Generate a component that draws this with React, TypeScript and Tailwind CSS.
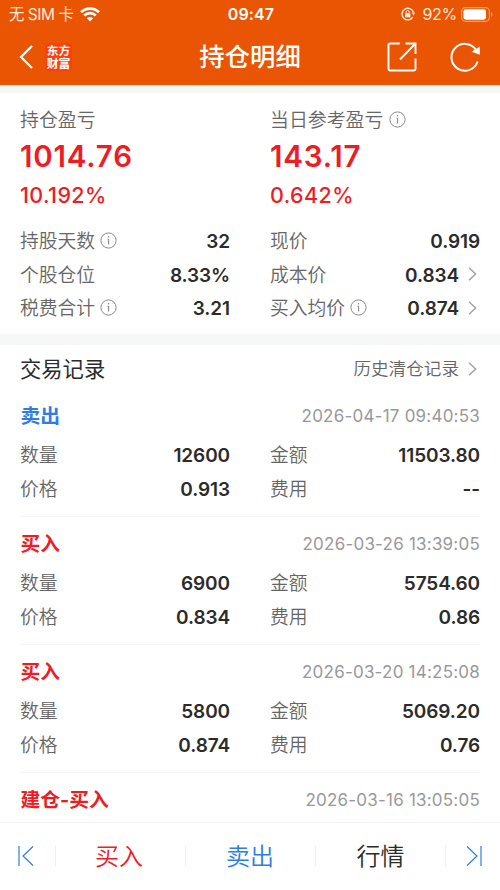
import type { ReactNode } from "react";

const summary = [
  { title: "持仓盈亏", value: "1014.76", percent: "10.192%", info: false },
  { title: "当日参考盈亏", value: "143.17", percent: "0.642%", info: true },
];

const details = [
  { label: "持股天数", value: "32", info: true, arrow: false },
  { label: "现价", value: "0.919", info: false, arrow: false },
  { label: "个股仓位", value: "8.33%", info: false, arrow: false },
  { label: "成本价", value: "0.834", info: false, arrow: true },
  { label: "税费合计", value: "3.21", info: true, arrow: false },
  { label: "买入均价", value: "0.874", info: true, arrow: true },
];

const records = [
  { id: 1, type: "卖出", sell: true, time: "2026-04-17 09:40:53", count: "12600", amount: "11503.80", price: "0.913", fee: "--" },
  { id: 2, type: "买入", sell: false, time: "2026-03-26 13:39:05", count: "6900", amount: "5754.60", price: "0.834", fee: "0.86" },
  { id: 3, type: "买入", sell: false, time: "2026-03-20 14:25:08", count: "5800", amount: "5069.20", price: "0.874", fee: "0.76" },
];

function InfoIcon() {
  return (
    <svg className="ml-[5px] h-[17px] w-[17px] shrink-0" viewBox="0 0 17 17" fill="none" stroke="#8a8a8a">
      <circle cx="8.5" cy="8.5" r="7.6" strokeWidth="1" />
      <path d="M7.6 7.2h1v5.4" strokeWidth="1.1" />
      <circle cx="8.5" cy="4.8" r="0.8" fill="#8a8a8a" stroke="none" />
    </svg>
  );
}

function ArrowIcon() {
  return (
    <svg className="ml-[9px] mr-[3px] h-[14px] w-[9px] shrink-0" viewBox="0 0 9 14" fill="none" stroke="#a3a3a3" strokeWidth="1.5">
      <path d="M1 0.8L7.6 7L1 13.2" />
    </svg>
  );
}

function Field({ label, value, info, arrow }: { label: string; value: string; info?: boolean; arrow?: boolean }) {
  return (
    <div className="flex h-[33.5px] items-center">
      <span className="pt-[4px] text-[18.8px] font-[350] text-[#666]">{label}</span>
      {info && <InfoIcon />}
      <span className="ml-auto pt-[2px] text-[19px] font-semibold tracking-[-0.1px] text-[#2b2b2b]">{value}</span>
      {arrow && <ArrowIcon />}
    </div>
  );
}

function RecordHead({ type, sell, time }: { type: string; sell?: boolean; time: string }) {
  return (
    <div className="flex h-[46px] items-center justify-between">
      <span className={sell ? "pl-[0.5px] pt-[3px] text-[19.8px] font-bold text-[#2f7de1]" : "pl-[0.5px] pt-[3px] text-[19.8px] font-bold text-[#ee1c25]"}>{type}</span>
      <span className="pt-[2px] text-[17px] tracking-[0.22px] text-[#999]">{time}</span>
    </div>
  );
}

function Tab({ children, color }: { children: ReactNode; color: string }) {
  return (
    <div className="flex flex-1 items-center justify-center border-r border-[#f1f1f1]">
      <span className={color}>{children}</span>
    </div>
  );
}

export default function App() {
  return (
    <div className="flex h-[890px] w-[500px] flex-col overflow-hidden bg-white font-['Inter','Noto_Sans_CJK_SC',sans-serif] leading-none">
      <header className="h-[85px] shrink-0 bg-[#ea5504] text-white">
        <div className="grid h-[28px] grid-cols-3 items-center pl-[9px] pr-[7px]">
          <div className="flex items-center text-[15.5px] text-[#ffe9d9]">
            <span className="whitespace-nowrap pt-[1px] tracking-[-0.5px]">无 SIM 卡</span>
            <svg className="ml-[7px] h-[15px] w-[20px]" viewBox="0 0 20 15" fill="none" stroke="#fff" strokeWidth="2.7">
              <path d="M1 5.2C6 0.3 14 0.3 19 5.2M4.2 8.6C7.6 5.4 12.4 5.4 15.8 8.6" />
              <path d="M10 14.4L6.8 11.2C8.6 9.6 11.4 9.6 13.2 11.2Z" fill="#fff" stroke="none" />
            </svg>
          </div>
          <div className="text-center text-[16px] font-semibold tracking-[0.1px]">09:47</div>
          <div className="flex items-center justify-end text-[16px] text-[#ffe9d9]">
            <svg className="mr-[7px] h-[14px] w-[14px]" viewBox="0 0 14 14" fill="none" stroke="#ffe9d9" strokeWidth="1.4">
              <path d="M11.8 10.2A5.8 5.8 0 1 1 12.4 5.2" />
              <path d="M10.6 5.4h3.4l-1.4 3z" fill="#ffe9d9" stroke="none" />
              <rect x="4" y="6.2" width="5.4" height="4" rx="0.5" fill="#ffe9d9" stroke="none" />
              <path d="M5.2 6.3V5a1.5 1.5 0 0 1 3 0v1.3" strokeWidth="1" />
            </svg>
            <span className="tracking-[-0.3px]">92%</span>
            <svg className="ml-[4px] h-[15px] w-[32px]" viewBox="0 0 32 15" fill="none">
              <rect x="0.6" y="0.6" width="27.8" height="13.8" rx="4" stroke="#f7a878" strokeWidth="1.1" />
              <rect x="2.4" y="2.3" width="22.6" height="10.4" rx="2.4" fill="#fff" />
              <path d="M30 5c1.8 0.7 1.8 4.3 0 5z" fill="#f7a878" />
            </svg>
          </div>
        </div>
        <div className="grid h-[57px] grid-cols-3 items-center pl-[19px] pr-[19px]">
          <div className="flex items-center">
            <svg className="h-[24px] w-[14px]" viewBox="0 0 14 24" fill="none" stroke="#fff" strokeWidth="2.3">
              <path d="M13 1L2 12L13 23" />
            </svg>
            <div className="ml-[12px] flex h-[28px] w-[27px] flex-col items-center justify-center rounded-[4px] bg-[#fd3f0c] pb-[2px] font-['Noto_Sans_CJK_SC',sans-serif] text-[11.8px] font-bold leading-[13px]">
              <span className="block h-[13px]">东方</span>
              <span className="block h-[13px]">财富</span>
            </div>
          </div>
          <h1 className="text-center text-[25.4px] font-medium">持仓明细</h1>
          <div className="flex items-center justify-end">
            <svg className="mr-[33px] h-[30px] w-[30px]" viewBox="0 0 30 30" fill="none" stroke="#fff" strokeWidth="1.9">
              <path d="M12.8 1.5H3Q1.5 1.5 1.5 3V27Q1.5 28.5 3 28.5H27Q28.5 28.5 28.5 27V16.5" />
              <path d="M18.5 1.5H28.5V12M28 2L13 17.5" />
            </svg>
            <svg className="h-[30px] w-[31px]" viewBox="0 0 31 30" fill="none" stroke="#fff" strokeWidth="2">
              <path d="M27.6 19.5A13.4 13.4 0 1 1 25.8 7.5" />
              <path d="M29.8 4.6V12.8L21.6 9.8Z" fill="#fff" stroke="none" />
            </svg>
          </div>
        </div>
      </header>

      <section className="h-[260px] shrink-0 border-b-[11px] border-t-8 border-[#f6f8f8] px-[20px] pt-[12px]">
        <div className="grid grid-cols-2 gap-x-[40px]">
          {summary.map((item) => (
            <div key={item.title}>
              <div className="flex h-[29px] items-center whitespace-nowrap text-[18.9px] font-[350] text-[#666]">
                <span className="pr-[1px] pt-[3px]">{item.title}</span>
                {item.info && <InfoIcon />}
              </div>
              <div className="flex h-[45px] items-center text-[29.5px] font-semibold tracking-[0.8px] text-[#ee1c25]">{item.value}</div>
              <div className="flex h-[33px] items-center text-[21.5px] font-medium tracking-[0.4px] text-[#ee1c25]">{item.percent}</div>
            </div>
          ))}
        </div>
        <div className="mt-[12px] grid grid-cols-2 gap-x-[40px]">
          {details.map((item) => (
            <Field key={item.label} {...item} />
          ))}
        </div>
      </section>

      <main className="min-h-0 flex-1 overflow-hidden px-[20px]">
        <div className="flex h-[47px] items-center justify-between">
          <h2 className="pt-[2px] text-[21.3px] text-[#2b2b2b]">交易记录</h2>
          <div className="flex items-center text-[17.6px] font-[350] text-[#666]">
            <span className="pt-[1px]">历史清仓记录</span>
            <ArrowIcon />
          </div>
        </div>
        {records.map((record) => (
          <div key={record.id} className="h-[128px]">
            <RecordHead type={record.type} sell={record.sell} time={record.time} />
            <div className="grid h-[79px] grid-cols-2 content-start gap-x-[40px] border-b border-[#f5f5f5]">
              <Field label="数量" value={record.count} />
              <Field label="金额" value={record.amount} />
              <Field label="价格" value={record.price} />
              <Field label="费用" value={record.fee} />
            </div>
          </div>
        ))}
        <RecordHead type="建仓-买入" time="2026-03-16 13:05:05" />
      </main>

      <footer className="flex h-[68px] shrink-0 border-t border-[#f2f2f2] pb-[1px] text-[24px] font-[350]">
        <div className="flex w-full items-center">
          <div className="flex h-[22px] w-[56px] items-center border-r border-[#f1f1f1] pl-[18px]">
            <svg className="h-[20px] w-[16px]" viewBox="0 0 16 20" fill="none" stroke="#2f7de1" strokeWidth="1.2">
              <path d="M1 0V20M15 0.5L5 10L15 19.5" />
            </svg>
          </div>
          <div className="flex h-[22px] flex-1">
            <Tab color="text-[#ee1c25] pt-[1px] pr-[3px]">买入</Tab>
            <Tab color="text-[#2f7de1] pt-[1px] pr-[1px]">卖出</Tab>
            <Tab color="text-[#2b2b2b] pt-[1px]">行情</Tab>
          </div>
          <div className="flex w-[54px] items-center pl-[20px]">
            <svg className="h-[20px] w-[16px]" viewBox="0 0 16 20" fill="none" stroke="#2f7de1" strokeWidth="1.2">
              <path d="M15 0V20M1 0.5L11 10L1 19.5" />
            </svg>
          </div>
        </div>
      </footer>
    </div>
  );
}
